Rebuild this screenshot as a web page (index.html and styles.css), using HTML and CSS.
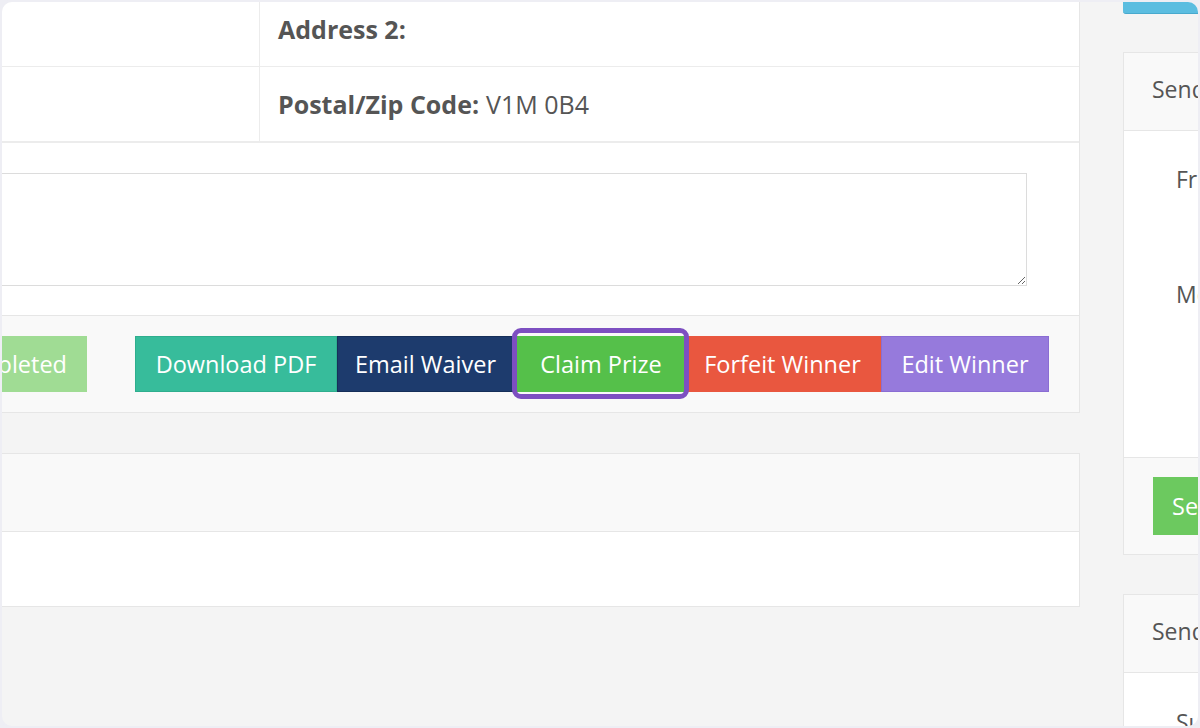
FILE: index.html
```html
<!doctype html>
<html>
  <head>
    <meta charset="utf-8">
    <title>Winner Details</title>
    <link rel="stylesheet" href="styles.css">
  </head>
  <body>
    <div class="frame">
      <div class="page">

        <div class="main">
          <div class="panel">
            <div class="info">
              <div class="info-row">
                <div class="info-cell info-label"></div>
                <div class="info-cell"><strong>Address 2:</strong></div>
              </div>
              <div class="info-row">
                <div class="info-cell info-label"></div>
                <div class="info-cell"><strong>Postal/Zip Code:</strong> V1M 0B4</div>
              </div>
            </div>

            <div class="panel-body notes">
              <textarea class="notes-input"></textarea>
            </div>

            <div class="panel-footer actions">
              <button class="btn btn-done">Mark Completed</button>
              <div class="btn-group">
                <button class="btn btn-pdf">Download PDF</button>
                <button class="btn btn-email">Email Waiver</button>
                <button class="btn btn-claim">Claim Prize</button>
                <button class="btn btn-forfeit">Forfeit Winner</button>
                <button class="btn btn-edit">Edit Winner</button>
              </div>
            </div>
          </div>

          <div class="panel panel-second">
            <div class="panel-heading"></div>
            <div class="panel-body empty"></div>
          </div>
        </div>

        <div class="side">
          <div class="side-top"></div>

          <div class="panel side-panel">
            <div class="panel-heading">Send Email</div>
            <div class="panel-body side-form">
              <div class="form-row">From:</div>
              <div class="form-row form-message">Message:</div>
            </div>
            <div class="panel-footer">
              <button class="btn btn-send">Send</button>
            </div>
          </div>

          <div class="panel side-panel side-last">
            <div class="panel-heading">Send SMS</div>
            <div class="panel-body side-form">
              <div class="form-row form-subject">Subject:</div>
            </div>
          </div>
        </div>

      </div>
    </div>
  </body>
</html>
```

FILE: styles.css
```css
* {
  box-sizing: border-box;
}

html,
body {
  margin: 0;
  padding: 0;
  width: 100%;
  height: 100%;
  overflow: hidden;
  background: #eeeef4;
}
body {
  font-family: "Open Sans", "Liberation Sans", sans-serif;
  font-size: 23px;
  line-height: 30px;
  color: #555;
}

.frame {
  width: 1200px;
  height: 728px;
  border: 2px solid #eeeef4;
  border-radius: 12px;
  background: #f4f4f4;
  overflow: hidden;
}
.page {
  display: flex;
  align-items: flex-start;
}

/* left column, cut off on the left edge */
.main {
  flex: none;
  width: 1378px;
  margin-left: -300px;
  margin-top: -11px;
}
.panel {
  background: #fff;
  border: 1px solid #e6e6e6;
}
.panel-second {
  margin-top: 40px;
}
.panel-heading {
  height: 78px;
  background: #f9f9f9;
  border-bottom: 1px solid #e6e6e6;
  padding: 0 28px 6px;
  display: flex;
  align-items: center;
}
.panel-footer {
  background: #f9f9f9;
  border-top: 1px solid #e6e6e6;
}

.info-row {
  display: grid;
  grid-template-columns: 557px 1fr;
  border-bottom: 1px solid #ececec;
}
.info-cell {
  height: 74px;
  padding: 0 18px;
  display: flex;
  align-items: center;
  font-size: 25px;
}
.info-label {
  border-right: 1px solid #ececec;
}
.info-cell strong {
  font-weight: 700;
  margin-right: 7px;
}

.notes {
  border-top: 1px solid #ececec;
  padding: 30px 52px 29px 30px;
}
.notes-input {
  display: block;
  width: 100%;
  height: 113px;
  border: 1px solid #dcdcdc;
  border-radius: 0;
  margin: 0;
  font: inherit;
}

.actions {
  display: flex;
  justify-content: flex-end;
  align-items: center;
  padding: 20px 30px 20px;
}
.btn-group {
  display: flex;
  margin-left: 48px;
}
.btn {
  height: 56px;
  padding: 0 20px;
  margin: 0;
  border: none;
  border-radius: 0;
  font-family: "Open Sans", "Liberation Sans", sans-serif;
  font-size: 23.5px;
  color: #fff;
  white-space: nowrap;
  cursor: pointer;
}
.btn-group .btn {
  padding: 0;
  text-align: center;
}
.btn-done {
  background: #a0dc94;
}
.btn-pdf {
  width: 202px;
  background: #37bc9b;
  border: 1px solid #2fae8e;
}
.btn-email {
  width: 177px;
  background: #1d3b6d;
  border: 1px solid #162f59;
}
.btn-group .btn-claim {
  position: relative;
  width: 170px;
  padding-left: 4px;
  background: #55c04a;
}
/* highlight ring drawn over the claim button */
.btn-claim::after {
  content: "";
  position: absolute;
  top: -8px;
  bottom: -7px;
  left: -2px;
  right: -5px;
  border: 5px solid #7d4fc1;
  border-radius: 9px;
}
.btn-forfeit {
  width: 197px;
  background: #e9573f;
}
.btn-edit {
  width: 168px;
  background: #967adc;
  border: 1px solid #8a6dd3;
}

.empty {
  height: 74px;
}

/* right column, cut off on the right edge */
.side {
  flex: none;
  width: 380px;
  margin-left: 43px;
}
.side-top {
  height: 12px;
  background: #5bbde0;
  border-bottom: 1px solid #48a9cd;
  border-radius: 0 0 3px 3px;
}
.side-panel {
  margin-top: 38px;
}
.side-last {
  margin-top: 39px;
}
.side-form {
  height: 326px;
  padding: 33px 52px;
}
.side-last .side-form {
  height: 120px;
  padding-top: 34px;
}
.form-message {
  margin-top: 85px;
}
.side-panel .panel-footer {
  padding: 19px 29px 19px;
}
.btn-send {
  height: 58px;
  padding: 0 19px;
  background: #6cc95f;
}
```
